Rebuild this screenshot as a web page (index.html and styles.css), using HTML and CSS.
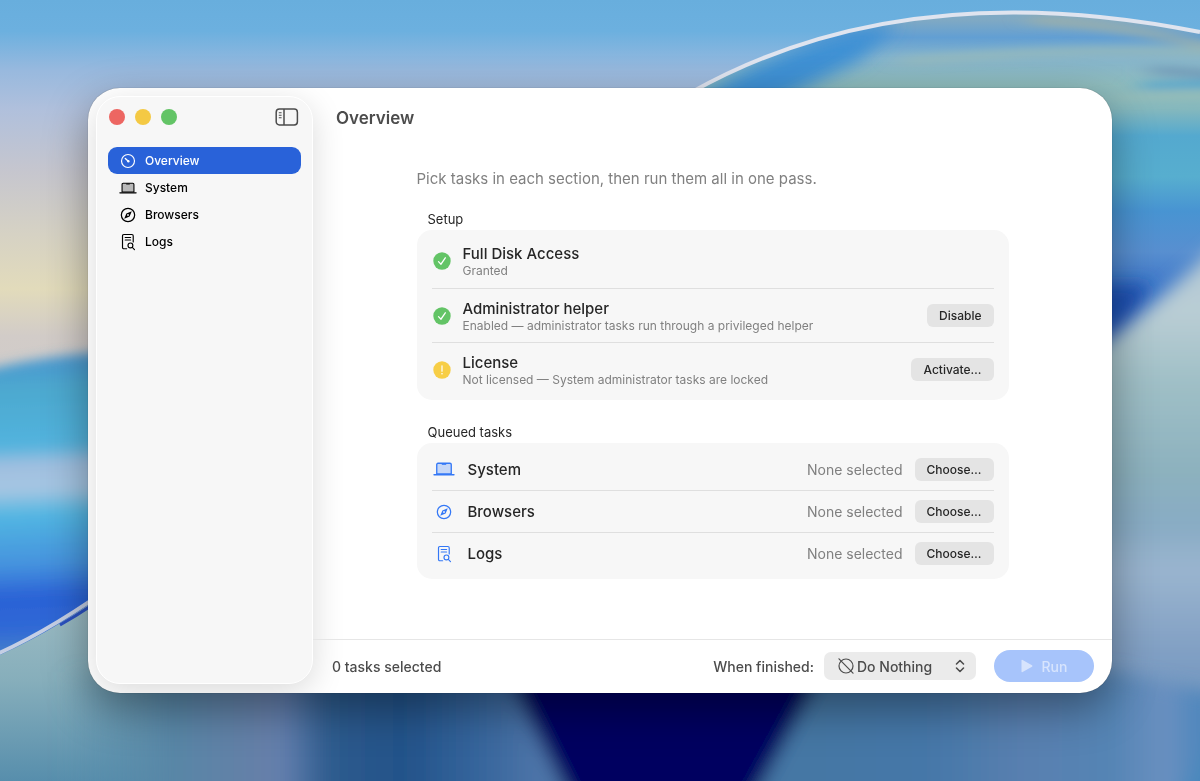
FILE: index.html
```html
<!DOCTYPE html>
<html lang="en">
<head>
<meta charset="utf-8">
<title>Overview</title>
<link rel="stylesheet" href="styles.css">
</head>
<body class="desktop">
<svg class="wallpaper" viewBox="0 0 1200 781" preserveAspectRatio="none" aria-hidden="true">
  <defs>
    <linearGradient id="sky" x1="0" y1="0" x2="0" y2="1">
      <stop offset="0" stop-color="#68aedd"/>
      <stop offset=".04" stop-color="#6cb0df"/>
      <stop offset=".09" stop-color="#98b9de"/>
      <stop offset=".14" stop-color="#b0c0dc"/>
      <stop offset=".22" stop-color="#c6c6ce"/>
      <stop offset=".30" stop-color="#d6d2c4"/>
      <stop offset=".37" stop-color="#e2dbbb"/>
      <stop offset=".43" stop-color="#d2ccc8"/>
      <stop offset="1" stop-color="#b8c2d6"/>
    </linearGradient>
    <linearGradient id="ground" gradientUnits="userSpaceOnUse" x1="0" y1="600" x2="0" y2="781">
      <stop offset="0" stop-color="#9dbcc4"/>
      <stop offset=".45" stop-color="#86aebb"/>
      <stop offset="1" stop-color="#578eac"/>
    </linearGradient>
    <linearGradient id="band" gradientUnits="userSpaceOnUse" x1="0" y1="346" x2="12" y2="660">
      <stop offset="0" stop-color="#4a8fd0"/>
      <stop offset=".14" stop-color="#4da9cf"/>
      <stop offset=".32" stop-color="#52b3de"/>
      <stop offset=".38" stop-color="#a0bfe0"/>
      <stop offset=".46" stop-color="#a6c6e2"/>
      <stop offset=".54" stop-color="#52b6e2"/>
      <stop offset=".7" stop-color="#4592de"/>
      <stop offset=".8" stop-color="#2b62d6"/>
      <stop offset=".9" stop-color="#2f68d6"/>
      <stop offset="1" stop-color="#4b86c8"/>
    </linearGradient>
    <linearGradient id="arc" gradientUnits="userSpaceOnUse" x1="0" y1="0" x2="0" y2="340">
      <stop offset="0" stop-color="#7fabc8"/>
      <stop offset=".06" stop-color="#7fa9c4"/>
      <stop offset=".11" stop-color="#629fd3"/>
      <stop offset=".17" stop-color="#85b4cc"/>
      <stop offset=".25" stop-color="#8fbcbd"/>
      <stop offset=".32" stop-color="#85b8bd"/>
      <stop offset=".4" stop-color="#54a9cf"/>
      <stop offset=".52" stop-color="#57aecf"/>
      <stop offset=".62" stop-color="#4894d2"/>
      <stop offset=".74" stop-color="#588fd0"/>
      <stop offset=".86" stop-color="#3a74c8"/>
      <stop offset="1" stop-color="#2456b8"/>
    </linearGradient>
    <linearGradient id="side" gradientUnits="userSpaceOnUse" x1="0" y1="250" x2="0" y2="781">
      <stop offset="0" stop-color="#b4c9d6"/>
      <stop offset=".12" stop-color="#b9cdd4"/>
      <stop offset=".25" stop-color="#9fbfc6"/>
      <stop offset=".42" stop-color="#8cb1be"/>
      <stop offset=".52" stop-color="#88abc4"/>
      <stop offset=".6" stop-color="#9ab5cf"/>
      <stop offset=".72" stop-color="#87a4c6"/>
      <stop offset=".86" stop-color="#6f94be"/>
      <stop offset="1" stop-color="#4c80b4"/>
    </linearGradient>
    <linearGradient id="floor" gradientUnits="userSpaceOnUse" x1="60" y1="0" x2="1200" y2="0">
      <stop offset="0" stop-color="#578eac" stop-opacity="0"/>
      <stop offset=".1" stop-color="#5886a6"/>
      <stop offset=".18" stop-color="#667fa8"/>
      <stop offset=".195" stop-color="#637fae"/>
      <stop offset=".235" stop-color="#2e5c8e"/>
      <stop offset=".3" stop-color="#235289"/>
      <stop offset=".36" stop-color="#33639a"/>
      <stop offset=".42" stop-color="#4d74a8"/>
      <stop offset=".66" stop-color="#4477a4"/>
      <stop offset=".76" stop-color="#4577a8"/>
      <stop offset=".85" stop-color="#5a80b0"/>
      <stop offset=".92" stop-color="#5484b4"/>
      <stop offset=".97" stop-color="#6a90c0"/>
      <stop offset="1" stop-color="#4f87bd"/>
    </linearGradient>
    <filter id="soft" x="-30%" y="-30%" width="160%" height="160%"><feGaussianBlur stdDeviation="9"/></filter>
    <filter id="streak" x="-30%" y="-60%" width="160%" height="220%"><feGaussianBlur stdDeviation="12 4"/></filter>
    <filter id="edge" x="-30%" y="-10%" width="160%" height="120%"><feGaussianBlur stdDeviation="6"/></filter>
    <filter id="line" x="-5%" y="-20%" width="110%" height="140%"><feGaussianBlur stdDeviation=".6"/></filter>
    <clipPath id="dome"><path d="M690 93C830 14 1000-8 1200 32V600H690Z"/></clipPath>
  </defs>
  <rect width="1200" height="781" fill="url(#sky)"/>
  <path d="M-60 384Q40 348 180 350V700H-60Z" fill="url(#band)" filter="url(#edge)"/>
  <path d="M0 655Q60 628 120 582L400 420H1200V781H0Z" fill="url(#ground)"/>
  <path d="M60 625Q90 608 120 585" fill="none" stroke="#2a50c0" stroke-width="3"/>
  <path d="M-5 655Q55 628 120 580" fill="none" stroke="#c5cfe4" stroke-width="4" filter="url(#line)"/>
  <g clip-path="url(#dome)">
    <rect x="600" width="600" height="600" fill="url(#arc)"/>
    <g filter="url(#soft)">
      <path d="M640 140Q760 40 900 22L860 60 760 110Z" fill="#3c90d4"/>
    </g>
    <g filter="url(#streak)" fill="none">
      <path d="M1030 20Q1130 24 1220 50" stroke="#9fb0a8" stroke-width="7"/>
      <path d="M900 62Q1080 46 1220 54" stroke="#95b9bc" stroke-width="8"/>
      <path d="M1150 70Q1190 72 1230 76" stroke="#6f98b8" stroke-width="8"/>
      <path d="M1140 86Q1180 84 1230 84" stroke="#4fa3cf" stroke-width="7"/>
      <path d="M1110 98Q1170 94 1230 96" stroke="#95bcb8" stroke-width="7"/>
    </g>
    <path d="M1060 285H1150L1120 350H1060Z" fill="#1f50b0" filter="url(#soft)"/>
  </g>
  <path d="M1060 375Q1140 320 1240 225V830H1060Z" fill="url(#side)" filter="url(#soft)"/>
  <g filter="url(#soft)">
    <path d="M50 672H1112L1240 700V820H20Z" fill="url(#floor)"/>
    <path d="M1215 735L1240 700V820H1165Z" fill="#4a88bd"/>
    <path d="M495 650H835L742 820H580Z" fill="#000060"/>
  </g>
  <path d="M690 93C830 14 1000-8 1200 32" fill="none" stroke="#dfe4ef" stroke-width="4" filter="url(#line)"/>
</svg>

<svg class="sprite" aria-hidden="true">
  <symbol id="i-gauge" viewBox="0 0 20 20"><g fill="none" stroke="currentColor" stroke-linecap="round"><circle cx="10" cy="10" r="7.2" stroke-width="1.3"/><path d="M10.4 10.4L7 7.2" stroke-width="1.5"/></g><circle cx="10.4" cy="10.3" r="1.3" fill="currentColor"/></symbol>
  <symbol id="i-laptop" viewBox="0 0 20 20"><path d="M3.4 14.5V6Q3.4 4.8 4.6 4.8H15.4Q16.6 4.8 16.6 6V14.5Z" fill="currentColor" fill-opacity=".25" stroke="currentColor" stroke-width="1.2"/><path d="M8 5H12V6.2H8Z" fill="currentColor"/><path d="M1 15.3H19" stroke="currentColor" stroke-width="1.4" stroke-linecap="round"/></symbol>
  <symbol id="i-compass" viewBox="0 0 20 20"><circle cx="10" cy="10" r="7.4" fill="none" stroke="currentColor" stroke-width="1.4"/><path fill-rule="evenodd" d="M14.2 5.8L11.8 11.8 5.8 14.2 8.2 8.2ZM10 9A1 1 0 1 0 10 11A1 1 0 1 0 10 9Z" fill="currentColor"/></symbol>
  <symbol id="i-logs" viewBox="0 0 20 20"><g fill="none" stroke="currentColor" stroke-width="1.3" stroke-linecap="round"><path d="M8.5 17.5H5.4Q3.9 17.5 3.9 16V3.2Q3.9 1.7 5.4 1.7H14.3Q15.8 1.7 15.8 3.2V10"/><path d="M6.9 5H12.9M6.9 7.8H12.9"/><circle cx="12.7" cy="13.8" r="2.7"/><path d="M14.8 16L17.2 18.4"/></g></symbol>
  <symbol id="i-check" viewBox="0 0 18 18"><circle cx="9" cy="9" r="8.7" fill="#63c466"/><path d="M5.5 9.6L8 12.2 12.3 5.8" fill="none" stroke="#fff" stroke-width="1.3" stroke-linecap="round" stroke-linejoin="round"/></symbol>
  <symbol id="i-warn" viewBox="0 0 18 18"><circle cx="9" cy="9" r="8.7" fill="#f7ce46"/><path d="M9 4.8V10.2" stroke="#fff" stroke-width="1.2" stroke-linecap="round"/><circle cx="9" cy="12.8" r=".8" fill="#fff"/></symbol>
</svg>

<div class="window">
  <aside class="sidebar">
    <div class="titlebar">
      <div class="lights">
        <button class="light light-close" aria-label="Close"></button>
        <button class="light light-min" aria-label="Minimize"></button>
        <button class="light light-zoom" aria-label="Zoom"></button>
      </div>
      <button class="toggle" aria-label="Toggle sidebar">
        <svg width="24" height="18" viewBox="0 0 24 18" fill="none" stroke="currentColor" stroke-width="1.5"><rect x="1.2" y="1" width="21.2" height="16" rx="3.2"/><path d="M9 1V17"/><path d="M3.8 4.8H6.6M3.8 7.3H6.6M3.8 9.8H6.6" stroke-width="1.1"/></svg>
      </button>
    </div>
    <nav class="nav">
      <a class="nav-item nav-active" href="#overview" aria-current="page"><svg class="nav-icon"><use href="#i-gauge"/></svg>Overview</a>
      <a class="nav-item" href="#system"><svg class="nav-icon"><use href="#i-laptop"/></svg>System</a>
      <a class="nav-item" href="#browsers"><svg class="nav-icon"><use href="#i-compass"/></svg>Browsers</a>
      <a class="nav-item" href="#logs"><svg class="nav-icon"><use href="#i-logs"/></svg>Logs</a>
    </nav>
  </aside>

  <main class="main">
    <h1 class="title">Overview</h1>
    <div class="content">
      <p class="intro">Pick tasks in each section, then run them all in one pass.</p>
      <section class="group">
        <h2 class="group-title">Setup</h2>
        <ul class="card">
          <li class="row">
            <svg class="status"><use href="#i-check"/></svg>
            <div class="row-text"><h3 class="row-title">Full Disk Access</h3><p class="row-note">Granted</p></div>
          </li>
          <li class="row">
            <svg class="status"><use href="#i-check"/></svg>
            <div class="row-text"><h3 class="row-title">Administrator helper</h3><p class="row-note">Enabled — administrator tasks run through a privileged helper</p></div>
            <button class="btn">Disable</button>
          </li>
          <li class="row">
            <svg class="status"><use href="#i-warn"/></svg>
            <div class="row-text"><h3 class="row-title">License</h3><p class="row-note">Not licensed — System administrator tasks are locked</p></div>
            <button class="btn">Activate…</button>
          </li>
        </ul>
      </section>
      <section class="group">
        <h2 class="group-title">Queued tasks</h2>
        <ul class="card card-tasks">
          <li class="row task"><svg class="task-icon task-wide"><use href="#i-laptop"/></svg><h3 class="row-title row-text">System</h3><span class="chosen">None selected</span><button class="btn">Choose…</button></li>
          <li class="row task"><svg class="task-icon"><use href="#i-compass"/></svg><h3 class="row-title row-text">Browsers</h3><span class="chosen">None selected</span><button class="btn">Choose…</button></li>
          <li class="row task"><svg class="task-icon"><use href="#i-logs"/></svg><h3 class="row-title row-text">Logs</h3><span class="chosen">None selected</span><button class="btn">Choose…</button></li>
        </ul>
      </section>
    </div>
    <footer class="footer">
      <span class="count">0 tasks selected</span>
      <label class="finish-label" for="finish">When finished:</label>
      <div class="select-box">
        <svg class="none-icon" viewBox="0 0 18 18" fill="none" stroke="currentColor" stroke-width="1.2" stroke-linecap="round"><circle cx="9" cy="9" r="7"/><path d="M2 1.8L16 16.2"/></svg>
        <select class="select" id="finish"><option>Do Nothing</option></select>
        <svg class="chevrons" viewBox="0 0 10 14" fill="none" stroke="currentColor" stroke-width="1.6" stroke-linecap="round" stroke-linejoin="round"><path d="M1.5 5L5 1.5 8.5 5M1.5 9L5 12.5 8.5 9"/></svg>
      </div>
      <button class="run" disabled><svg width="12" height="14" viewBox="0 0 12 14" fill="currentColor"><path d="M.5 1.5Q.5.3 1.6.9L11 6.3Q12 7 11 7.7L1.6 13.1Q.5 13.7.5 12.5Z"/></svg>Run</button>
    </footer>
  </main>
</div>
</body>
</html>
```
FILE: styles.css
```css
* { box-sizing: border-box; margin: 0; padding: 0; }

.desktop {
  min-height: 100vh;
  display: grid;
  padding: 88px;
  font-family: Inter, "Liberation Sans", sans-serif;
  font-size: 13px;
  color: #262626;
}
button, select { font: inherit; color: inherit; border: 0; background: none; }

.wallpaper { position: fixed; inset: 0; width: 100%; height: 100%; z-index: -1; }
.sprite { position: absolute; width: 0; height: 0; }

.window {
  display: flex;
  background: #fff;
  border-radius: 32px;
  overflow: hidden;
  box-shadow: 0 0 1px rgba(0, 0, 0, .5), 0 16px 44px rgba(0, 0, 0, .38);
}

.sidebar {
  flex: 0 0 217px;
  margin: 8px 0 9px 8px;
  padding: 11px;
  border: 1px solid #fff;
  border-radius: 24px;
  background: #f7f7f7;
  box-shadow: 0 8px 32px rgba(0, 0, 0, .15);
}
.titlebar { display: flex; align-items: center; justify-content: space-between; height: 18px; }
.lights { display: flex; gap: 10px; margin-left: 1px; }
.light { width: 16px; height: 16px; border-radius: 50%; }
.light-close { background: #ed6662; }
.light-min { background: #f4c944; }
.light-zoom { background: #63c466; }
.toggle { display: flex; color: #4c4c4c; margin-right: 2px; }

.nav { display: flex; flex-direction: column; margin-top: 21px; }
.nav-item {
  display: flex;
  align-items: center;
  gap: 8px;
  height: 27px;
  padding-left: 11px;
  border-radius: 9px;
  color: #000;
  font-size: 12px;
  font-weight: 500;
  text-decoration: none;
}
.nav-active { background: #2962d9; color: #fff; }
.nav-icon { width: 18px; height: 18px; }

.main { flex: 1; min-width: 0; display: flex; flex-direction: column; }
.title { padding: 19px 23px 0; font-size: 17px; line-height: 22px; font-weight: 600; color: #4c4c4c; }
.content { flex: 1; width: 100%; max-width: 592px; margin: 0 auto; padding-top: 40px; }
.intro { font-size: 15px; line-height: 20px; color: #808080; }
.group { margin-top: 20px; }
.group + .group { margin-top: 22px; }
.group-title { padding-left: 11px; font-size: 13px; line-height: 20px; font-weight: 400; }
.card { list-style: none; margin-top: 1px; padding: 4px 15px; border-radius: 15px; background: #f7f7f7; }
.card-tasks { padding: 5px 15px; }
.row { display: flex; align-items: center; gap: 12px; height: 54px; }
.row + .row { border-top: 1px solid #dfdfdf; }
.status { width: 18px; height: 18px; margin-left: 1px; flex: none; }
.row-text { flex: 1; }
.row-title { font-size: 15px; line-height: 19px; font-weight: 500; }
.row-note { font-size: 12px; line-height: 15px; color: #808080; }
.btn { height: 23px; padding: 0 12px; border-radius: 6px; background: #e4e4e4; font-size: 12px; font-weight: 500; }
.task { height: 42px; }
.task-icon { width: 20px; height: 18px; margin: 0 2px; color: #3478f6; flex: none; }
.task-wide { width: 24px; height: 22px; margin: 0; }
.chosen { font-size: 14px; color: #808080; }

.footer { display: flex; align-items: center; height: 54px; padding: 0 18px 1px 19px; border-top: 1px solid #e6e6e6; color: #4c4c4c; font-size: 14px; }
.count { flex: 1; font-weight: 500; }
.finish-label { margin-right: 10px; font-weight: 500; }
.select-box { position: relative; width: 152px; height: 28px; margin-right: 18px; }
.select { appearance: none; width: 100%; height: 100%; padding-left: 33px; border-radius: 7px; background: #ebebeb; font-weight: 500; }
.none-icon { position: absolute; left: 13px; top: 5px; width: 18px; height: 18px; }
.chevrons { position: absolute; right: 11px; top: 7px; width: 10px; height: 14px; }
.run { display: flex; align-items: center; justify-content: center; gap: 9px; width: 100px; height: 32px; border-radius: 16px; background: #a7c4fb; color: #d7e4fd; font-weight: 500; }
```
